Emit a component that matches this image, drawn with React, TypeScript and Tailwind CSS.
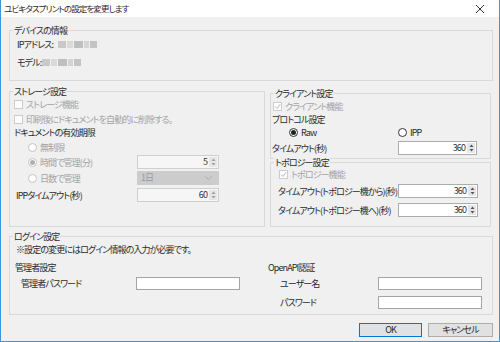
import React from "react";

const FONT = "[font-family:'Noto_Sans_CJK_JP','Noto_Sans',sans-serif] [font-feature-settings:'palt']";

function Group({ title, className, children }: { title: string; className?: string; children?: React.ReactNode }) {
  return (
    <div className={`border border-[#d9d9d9] ${className ?? ""}`}>
      <div className="-mt-[7px] ml-[3px] w-fit bg-[#f0f0f0] px-[1px] leading-[13px]">{title}</div>
      {children}
    </div>
  );
}

function Check({ label, checked, disabled }: { label: string; checked?: boolean; disabled?: boolean }) {
  return (
    <div className={`flex h-[13px] items-center gap-[3px] ${disabled ? "text-[#a3a3a3]" : ""}`}>
      <span className={`grid h-[9px] w-[9px] place-items-center border bg-white ${disabled ? "border-[#cccccc]" : "border-[#333]"}`}>
        {checked && (
          <svg width="7" height="7" viewBox="0 0 7 7">
            <path d="M1 3.5 L3 5.5 L6.2 1.2" fill="none" stroke={disabled ? "#b5b5b5" : "#222"} strokeWidth="1" />
          </svg>
        )}
      </span>
      <span className="leading-[13px]">{label}</span>
    </div>
  );
}

function Radio({ label, checked, disabled }: { label: string; checked?: boolean; disabled?: boolean }) {
  return (
    <div className={`flex h-[13px] items-center gap-[3px] ${disabled ? "text-[#a3a3a3]" : ""}`}>
      <span className={`grid h-[9px] w-[9px] place-items-center rounded-full border bg-white ${disabled ? "border-[#c4c4c4]" : "border-[#333]"}`}>
        {checked && <span className={`h-[5px] w-[5px] rounded-full ${disabled ? "bg-[#b0b0b0]" : "bg-[#222]"}`} />}
      </span>
      <span className="leading-[13px]">{label}</span>
    </div>
  );
}

function Spin({ value, disabled }: { value: string; disabled?: boolean }) {
  return (
    <div className={`flex h-[14px] border ${disabled ? "border-[#cfcfcf] bg-[#f6f6f6]" : "border-[#acacac] bg-white"}`}>
      <span className="flex-1 pr-[2px] text-right leading-[12px] text-[#333]">{value}</span>
      <span className="my-[1px] mr-[1px] flex w-[8px] items-center justify-center bg-[#e6e6e6]">
        <svg width="5" height="8" viewBox="0 0 5 8">
          <path d="M2.5 0.5 L4.5 3 L0.5 3 Z" fill={disabled ? "#a0a0a0" : "#555"} />
          <path d="M0.5 5 L4.5 5 L2.5 7.5 Z" fill={disabled ? "#a0a0a0" : "#555"} />
        </svg>
      </span>
    </div>
  );
}

function TextBox({ className }: { className?: string }) {
  return <div className={`h-[13px] border border-[#a4a4a4] bg-white ${className ?? ""}`} />;
}

function Blur({ className }: { className?: string }) {
  return (
    <div className={`flex h-[7px] items-center gap-[1px] blur-[0.6px] ${className ?? ""}`}>
      <span className="h-full w-[8px] bg-[#c9c9c9]" />
      <span className="h-full w-[6px] bg-[#dadada]" />
      <span className="h-full w-[9px] bg-[#bfbfbf]" />
      <span className="h-full w-[5px] bg-[#d4d4d4]" />
      <span className="h-full w-[7px] bg-[#c4c4c4]" />
    </div>
  );
}

export default function App() {
  return (
    <div className={`flex h-[342px] w-[500px] flex-col border-x border-b border-[#3f95dc] bg-[#f0f0f0] text-[9px] tracking-[-0.9px] text-[#2a2a2a] ${FONT}`}>
      <header className="flex h-[17px] items-center justify-between bg-white pl-[3px] pr-[14px]">
        <span className="text-[8.5px] leading-[13px]">ユビキタスプリントの設定を変更します</span>
        <svg width="10" height="10" viewBox="0 0 10 10">
          <path d="M1 1 L9 9 M9 1 L1 9" stroke="#333" strokeWidth="1" />
        </svg>
      </header>

      <div className="flex flex-1 flex-col">
        <Group title="デバイスの情報" className="ml-[8px] mt-[13px] h-[51px] w-[484px]">
          <div className="mt-[1px] flex items-center gap-[3px] pl-[7px] leading-[13px]">
            IPアドレス: <Blur className="ml-[2px]" />
          </div>
          <div className="mt-[5px] flex items-center gap-[1px] pl-[7px] leading-[13px]">
            モデル: <Blur />
          </div>
        </Group>

        <div className="mt-[10px] flex items-start gap-[5px] pl-[8px]">
          <Group title="ストレージ設定" className="h-[136px] w-[256px]">
            <div className="flex flex-col">
              <div className="pl-[4px]">
                <Check label="ストレージ機能" disabled />
              </div>
              <div className="mt-[2px] pl-[4px]">
                <Check label="印刷後にドキュメントを自動的に削除する。" disabled />
              </div>
              <div className="pl-[4px] leading-[13px]">ドキュメントの有効期限</div>
              <div className="mt-[2px] pl-[18px]">
                <Radio label="無制限" disabled />
              </div>
              <div className="mt-[1px] grid grid-cols-[127px_82px] items-center">
                <div className="pl-[18px]">
                  <Radio label="時間で管理(分)" checked disabled />
                </div>
                <Spin value="5" disabled />
              </div>
              <div className="mt-[2px] grid grid-cols-[127px_82px] items-center">
                <div className="pl-[18px]">
                  <Radio label="日数で管理" disabled />
                </div>
                <div className="flex h-[14px] items-center justify-between border border-[#cccccc] bg-[#cccccc] pl-[3px] pr-[6px] text-[#9a9a9a]">
                  <span className="leading-[12px]">1日</span>
                  <svg width="7" height="4" viewBox="0 0 7 4">
                    <path d="M0.5 0.5 L3.5 3.5 L6.5 0.5" fill="none" stroke="#a8a8a8" strokeWidth="1" />
                  </svg>
                </div>
              </div>
              <div className="mt-[3px] grid grid-cols-[127px_82px] items-center">
                <div className="pl-[6px] leading-[13px]">IPPタイムアウト(秒)</div>
                <Spin value="60" disabled />
              </div>
            </div>
          </Group>

          <div className="mt-[2px] flex flex-col">
            <Group title="クライアント設定" className="h-[66px] w-[221px]">
              <div className="pl-[2px]">
                <Check label="クライアント機能" checked disabled />
              </div>
              <div className="pl-[1px] leading-[13px]">プロトコル設定</div>
              <div className="grid grid-cols-[127px_79px]">
                <div className="pl-[18px]">
                  <Radio label="Raw" checked />
                </div>
                <Radio label="IPP" />
              </div>
              <div className="mt-[2px] grid grid-cols-[127px_79px] items-center">
                <div className="pl-[1px] leading-[13px]">タイムアウト(秒)</div>
                <Spin value="360" />
              </div>
            </Group>

            <Group title="トポロジー設定" className="mt-[3px] h-[65px] w-[221px]">
              <div className="-mt-[1px] pl-[8px]">
                <Check label="トポロジー機能" checked disabled />
              </div>
              <div className="mt-[3px] grid grid-cols-[127px_80px] items-center">
                <div className="whitespace-nowrap pl-[7px] leading-[13px]">タイムアウト(トポロジー機から)(秒)</div>
                <Spin value="360" />
              </div>
              <div className="mt-[5px] grid grid-cols-[127px_80px] items-center">
                <div className="whitespace-nowrap pl-[7px] leading-[13px]">タイムアウト(トポロジー機へ)(秒)</div>
                <Spin value="360" />
              </div>
            </Group>
          </div>
        </div>

        <Group title="ログイン設定" className="ml-[8px] mt-[9px] h-[79px] w-[484px]">
          <div className="pl-[6px] leading-[13px]">※設定の変更にはログイン情報の入力が必要です。</div>
          <div className="mt-[5px] grid grid-cols-[258px_1fr]">
            <div className="flex flex-col">
              <div className="pl-[5px] leading-[13px]">管理者設定</div>
              <div className="mt-[3px] grid grid-cols-[126px_104px] items-center">
                <div className="pl-[11px] leading-[13px]">管理者パスワード</div>
                <TextBox />
              </div>
            </div>
            <div className="flex flex-col">
              <div className="leading-[13px]">OpenAPI認証</div>
              <div className="mt-[3px] grid grid-cols-[110px_104px] items-center">
                <div className="pl-[12px] leading-[13px]">ユーザー名</div>
                <TextBox />
              </div>
              <div className="mt-[6px] grid grid-cols-[110px_104px] items-center">
                <div className="pl-[12px] leading-[13px]">パスワード</div>
                <TextBox />
              </div>
            </div>
          </div>
        </Group>

        <div className="mt-[8px] flex justify-end gap-[6px] pr-[6px]">
          <button className="h-[14px] w-[63px] border border-[#0078d7] bg-[#e1e1e1] leading-[12px]">OK</button>
          <button className="h-[14px] w-[65px] border border-[#adadad] bg-[#e1e1e1] leading-[12px]">キャンセル</button>
        </div>
      </div>
    </div>
  );
}
